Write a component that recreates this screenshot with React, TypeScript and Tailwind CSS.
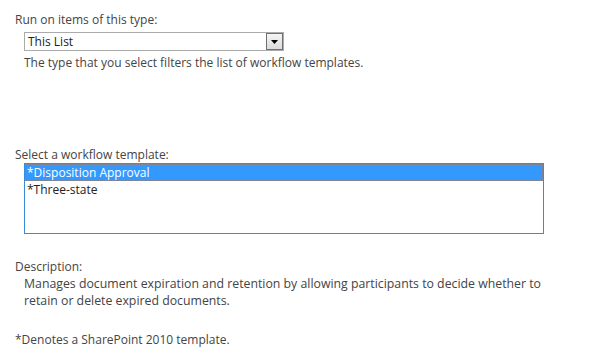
export default function App() {
  const templates = ["*Disposition Approval", "*Three-state"];

  return (
    <div
      className="w-[591px] h-[349px] bg-white text-[12px] leading-[17px] text-[#444] pl-[15px] pt-[11px]"
      style={{ fontFamily: '"Segoe UI", "Open Sans", "Noto Sans", sans-serif' }}
    >
      {/* type selector */}
      <div>Run on items of this type:</div>
      <div className="ml-[9px] mt-[4px] w-[260px] h-[19px] border border-[#ababab] flex items-center justify-between">
        <span className="pl-[3px] text-[#222]">This List</span>
        <span className="w-[17px] h-[17px] border border-[#707070] bg-gradient-to-b from-[#f4f4f4] to-[#dcdcdc] flex items-center justify-center">
          <svg width="7" height="4" viewBox="0 0 7 4">
            <path d="M0 0h7L3.5 4z" fill="#000" />
          </svg>
        </span>
      </div>
      <div className="ml-[9px] mt-[3px]">The type that you select filters the list of workflow templates.</div>

      {/* template list */}
      <div className="mt-[75px]">Select a workflow template:</div>
      <div className="ml-[9px] w-[520px] h-[71px] border border-[#3a8cd6]">
        {templates.map((t, i) => (
          <div
            key={t}
            className={
              i === 0
                ? "relative h-[17px] pl-[2px] bg-[#3399ff] text-white"
                : "h-[17px] pl-[2px] text-[#222]"
            }
          >
            {t}
            {i === 0 && (
              <svg className="absolute inset-0" width="518" height="17">
                <rect
                  x="0.5"
                  y="0.5"
                  width="517"
                  height="16"
                  fill="none"
                  stroke="#c8702c"
                  strokeDasharray="1 1"
                />
              </svg>
            )}
          </div>
        ))}
      </div>

      {/* description */}
      <div className="mt-[24px]">Description:</div>
      <div className="ml-[9px] whitespace-nowrap text-[12.3px]">
        Manages document expiration and retention by allowing participants to decide whether to
        <br />
        retain or delete expired documents.
      </div>
      <div className="mt-[22px]">*Denotes a SharePoint 2010 template.</div>
    </div>
  );
}
